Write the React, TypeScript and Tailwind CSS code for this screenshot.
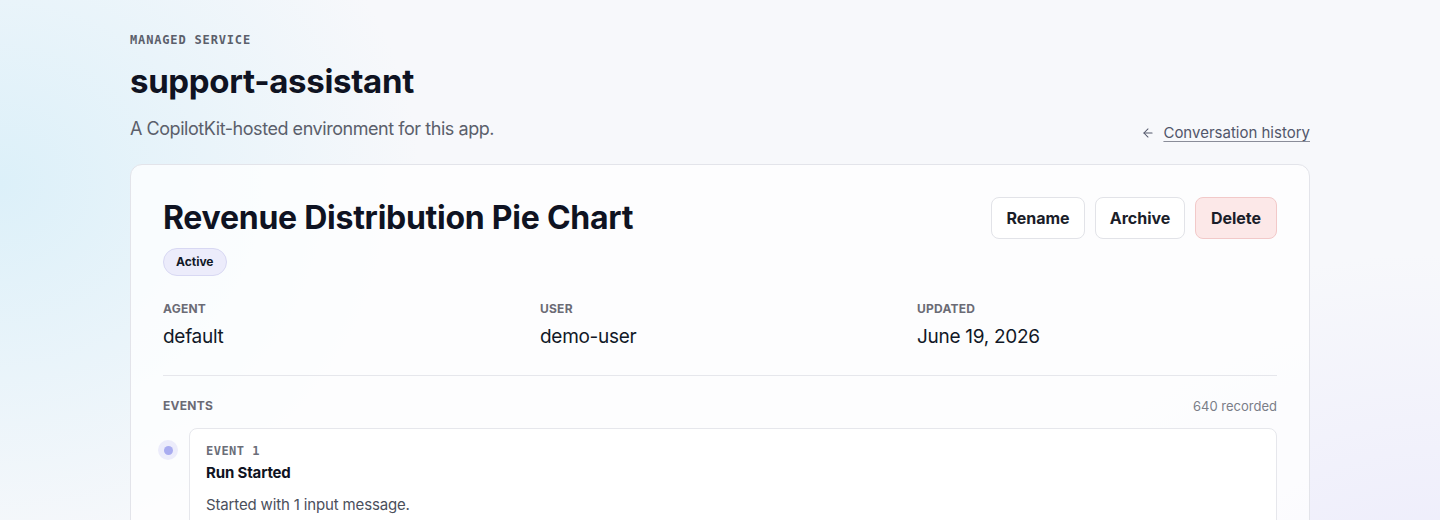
import { ArrowLeft } from "lucide-react";

const sans = "font-['Inter','Noto_Sans',sans-serif]";
const mono = "font-['DejaVu_Sans_Mono','Liberation_Mono',monospace]";

const Meta = ({ label, value }: { label: string; value: string }) => {
  return (
    <div className="flex flex-col gap-[8px]">
      <div className="text-[12px] font-bold tracking-[0.02em] text-[#6b6b75] leading-[16px]">{label}</div>
      <div className="text-[19px] text-[#111827] leading-[24px] tracking-[-0.015em]">{value}</div>
    </div>
  );
};

const App = () => {
  return (
    <div
      className={`min-h-screen w-full ${sans} bg-[#f7f8fb] bg-[radial-gradient(ellipse_420px_380px_at_0%_30%,#dcf0f9_0%,rgba(220,240,249,0)_100%),radial-gradient(ellipse_520px_360px_at_100%_100%,#ecebfb_0%,rgba(236,235,251,0)_100%)]`}
    >
      <div className="mx-auto w-[1180px] pt-[32px] pb-[40px]">
        <div className={`${mono} text-[12px] font-bold tracking-[0.07em] text-[#5b5f6b] leading-[16px]`}>
          MANAGED SERVICE
        </div>
        <h1 className="mt-[11px] text-[33px] font-bold text-[#0f1322] leading-[44px] tracking-[-0.01em]">
          support-assistant
        </h1>
        <div className="mt-[14px] flex items-end justify-between">
          <p className="text-[18px] text-[#5b5f6b] leading-[24px] tracking-[-0.025em]">
            A CopilotKit-hosted environment for this app.
          </p>
          <a className="mb-[-3px] flex items-center gap-[8px] text-[15px] text-[#52566a] leading-[22px]">
            <ArrowLeft size={14} strokeWidth={1.75} />
            <span className="underline underline-offset-[3px] decoration-[#8a8d99]">Conversation history</span>
          </a>
        </div>

        <div className="mt-[23px] rounded-[12px] border border-[#e3e4ea] bg-white/75 px-[32px] pt-[32px] pb-[40px]">
          <div className="flex items-start justify-between">
            <div>
              <h2 className="text-[32px] font-bold text-[#0f1322] leading-[42px] tracking-[-0.008em]">
                Revenue Distribution Pie Chart
              </h2>
              <span className="mt-[9px] inline-flex h-[28px] items-center rounded-full border border-[#d8d8f3] bg-[#ececfb] px-[12px] text-[12px] font-bold text-[#111827]">
                Active
              </span>
            </div>
            <div className="flex gap-[10px]">
              <button className="h-[42px] w-[94px] rounded-[8px] border border-[#e2e3e8] bg-white text-[16px] font-bold text-[#1a1d29]">
                Rename
              </button>
              <button className="h-[42px] w-[90px] rounded-[8px] border border-[#e2e3e8] bg-white text-[16px] font-bold text-[#1a1d29]">
                Archive
              </button>
              <button className="h-[42px] w-[82px] rounded-[8px] border border-[#f2c9c9] bg-[#fce8e8] text-[16px] font-bold text-[#1a1d29]">
                Delete
              </button>
            </div>
          </div>

          <div className="mt-[25px] grid grid-cols-3 gap-[17px]">
            <Meta label="AGENT" value="default" />
            <Meta label="USER" value="demo-user" />
            <Meta label="UPDATED" value="June 19, 2026" />
          </div>

          <div className="mt-[26px] border-t border-[#e6e7ec]" />

          <div className="mt-[22px] flex items-center justify-between">
            <div className="text-[12px] font-bold tracking-[0.02em] text-[#6b6b75] leading-[16px]">EVENTS</div>
            <div className="text-[13px] text-[#7a7d88] leading-[16px]">640 recorded</div>
          </div>

          <div className="mt-[14px] flex gap-[11px]">
            <div className="-ml-[5px] pt-[12px]">
              <div className="flex h-[20px] w-[20px] items-center justify-center rounded-full bg-[#ececfb]">
                <div className="h-[9px] w-[9px] rounded-full bg-[#a9acf0]" />
              </div>
            </div>
            <div className="flex-1 rounded-[8px] border border-[#e6e7ec] bg-white px-[16px] pt-[14px] pb-[16px]">
              <div className={`${mono} text-[12px] font-bold tracking-[0.04em] text-[#6b6e78] leading-[16px]`}>EVENT 1</div>
              <div className="mt-[3px] text-[15px] font-bold text-[#0f1322] leading-[22px] tracking-[-0.01em]">Run Started</div>
              <div className="mt-[10px] text-[15px] text-[#4b4f5c] leading-[22px] tracking-[-0.01em]">
                Started with 1 input message.
              </div>
            </div>
          </div>
        </div>
      </div>
    </div>
  );
};

export default App;
